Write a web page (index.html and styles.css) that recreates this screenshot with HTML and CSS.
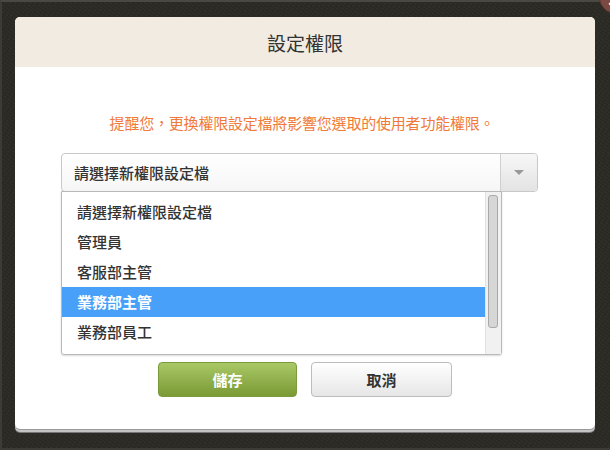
FILE: index.html
```html
<!DOCTYPE html>
<html lang="zh-Hant">
<head>
<meta charset="utf-8">
<title>設定權限</title>
<link rel="stylesheet" href="styles.css">
</head>
<body>
<div class="frame">
  <div class="dialog">
    <div class="dialog-header">設定權限</div>
    <div class="dialog-body">
      <p class="notice">提醒您，更換權限設定檔將影響您選取的使用者功能權限。</p>
      <div class="select-wrap">
        <div class="select">
          <span class="select-value">請選擇新權限設定檔</span>
          <span class="select-arrow"><span class="caret"></span></span>
        </div>
        <div class="dropdown">
          <ul class="options">
            <li class="option">請選擇新權限設定檔</li>
            <li class="option">管理員</li>
            <li class="option">客服部主管</li>
            <li class="option selected">業務部主管</li>
            <li class="option">業務部員工</li>
          </ul>
          <div class="scrollbar"><div class="thumb"></div></div>
        </div>
      </div>
      <div class="actions">
        <button class="btn btn-save">儲存</button>
        <button class="btn btn-cancel">取消</button>
      </div>
    </div>
  </div>
  <div class="close"><span class="close-x"></span></div>
</div>
</body>
</html>
```

FILE: styles.css
```css
* { box-sizing: border-box; }
html, body { margin: 0; padding: 0; }
body {
  width: 610px;
  height: 450px;
  overflow: hidden;
  font-family: "Noto Sans CJK TC", "Noto Sans", sans-serif;
  background: #2c2a25;
}
.frame {
  position: relative;
  width: 610px;
  height: 450px;
  padding: 17px 15px 0 15px;
  border-top: 2px solid #4a4843;
  border-left: 2px solid #3d3b36;
  border-bottom: 2px solid #3d3b36;
  background-color: #2c2a25;
  background-image:
    repeating-linear-gradient(37deg, rgba(255,255,255,0.025) 0 1px, transparent 1px 3px),
    repeating-linear-gradient(-53deg, rgba(0,0,0,0.08) 0 1px, transparent 1px 4px);
}
.dialog {
  margin-top: -2px;
  margin-left: -2px;
  width: 580px;
  height: 412px;
  background: #fff;
  border-radius: 5px;
  box-shadow: 0 1px 0 #9a9a9a, 0 3px 0 #c4c4c4, 0 4px 0 #777;
}
.dialog-header {
  height: 50px;
  background: #f1ebe1;
  border-radius: 5px 5px 0 0;
  display: flex;
  align-items: center;
  justify-content: center;
  font-size: 19px;
  color: #333;
}
.dialog-body {
  padding: 44px 45px 0 45px;
}
.notice {
  margin: 0;
  padding-right: 6px;
  text-align: center;
  font-size: 15px;
  letter-spacing: -0.2px;
  line-height: 24px;
  color: #f07a3a;
}
.select-wrap {
  position: relative;
  margin-top: 18px;
  margin-left: 1px;
  width: 477px;
}
.select {
  height: 39px;
  border: 1px solid #c8c8c8;
  border-radius: 4px;
  background: linear-gradient(#ffffff, #f6f6f6);
  display: flex;
  align-items: center;
}
.select-value {
  flex: 1;
  padding-left: 12px;
  font-size: 15px;
  font-weight: 500;
  color: #333;
}
.select-arrow {
  width: 37px;
  height: 100%;
  border-left: 1px solid #cfcfcf;
  border-radius: 0 4px 4px 0;
  background: linear-gradient(#f7f7f7, #e3e3e3);
  display: flex;
  align-items: center;
  justify-content: center;
}
.caret {
  width: 0;
  height: 0;
  border-left: 5px solid transparent;
  border-right: 5px solid transparent;
  border-top: 5px solid #999;
}
.dropdown {
  position: absolute;
  top: 38px;
  left: 0;
  width: 441px;
  height: 164px;
  background: #fff;
  border: 1px solid #b9b9b9;
  border-radius: 0 0 3px 3px;
  box-shadow: 0 1px 2px rgba(0,0,0,0.15);
  z-index: 5;
}
.options {
  list-style: none;
  margin: 0;
  padding: 5px 16px 0 0;
}
.option {
  height: 30px;
  line-height: 30px;
  padding-left: 15px;
  font-size: 15px;
  font-weight: 500;
  color: #333;
}
.option.selected {
  background: #48a0f8;
  color: #fff;
  font-weight: 700;
}
.scrollbar {
  position: absolute;
  top: 0;
  right: 0;
  width: 16px;
  height: 100%;
  background: #f1f1f1;
  border-left: 1px solid #e2e2e2;
  padding: 3px 0 0 2px;
}
.thumb {
  width: 10px;
  height: 133px;
  background: #d6d6d6;
  border: 1px solid #a9a9a9;
  border-radius: 3px;
}
.actions {
  margin-top: 170px;
  display: flex;
  justify-content: center;
  gap: 14px;
}
.btn {
  height: 35px;
  border-radius: 4px;
  font-family: "Noto Sans CJK TC", "Noto Sans", sans-serif;
  font-size: 15px;
  font-weight: 700;
  cursor: pointer;
  padding: 0;
}
.btn-save {
  width: 139px;
  border: 1px solid #7b9a3a;
  background: linear-gradient(#a9c866, #7a9a35);
  color: #fff;
}
.btn-cancel {
  width: 141px;
  border: 1px solid #bcbcbc;
  background: linear-gradient(#ffffff, #e6e6e6);
  color: #333;
}
.close {
  position: absolute;
  left: 597px;
  top: -22px;
  width: 34px;
  height: 34px;
  border-radius: 50%;
  background: #7a4a42;
  border: 1px solid #5a3530;
}
.close-x {
  position: absolute;
  left: 8px;
  top: 20px;
  width: 7px;
  height: 2px;
  background: #fff;
  transform: rotate(-50deg);
}
```
